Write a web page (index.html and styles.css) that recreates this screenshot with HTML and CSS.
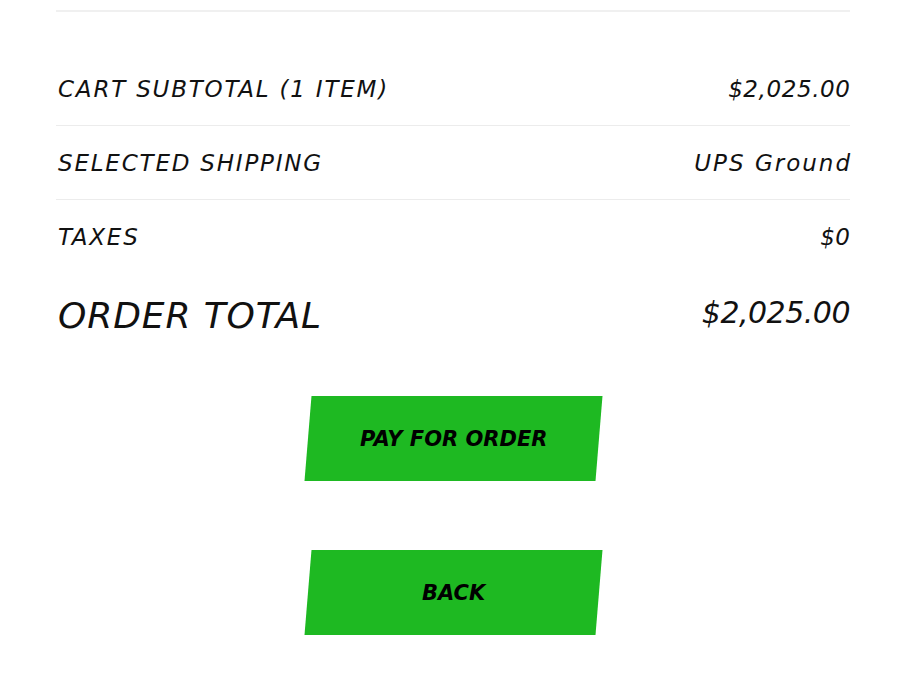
FILE: index.html
```html
<!DOCTYPE html>
<html>
<head>
<meta charset="utf-8">
<link rel="stylesheet" href="styles.css">
</head>
<body>
<div class="summary">
  <div class="top-rule"></div>
  <div class="row">
    <span class="label">CART SUBTOTAL (1 ITEM)</span>
    <span class="value">$2,025.00</span>
  </div>
  <div class="row">
    <span class="label">SELECTED SHIPPING</span>
    <span class="value value-text">UPS Ground</span>
  </div>
  <div class="row no-rule">
    <span class="label">TAXES</span>
    <span class="value">$0</span>
  </div>
  <div class="row total">
    <span class="label">ORDER TOTAL</span>
    <span class="value">$2,025.00</span>
  </div>
  <div class="actions">
    <a class="btn"><span>PAY FOR ORDER</span></a>
    <a class="btn"><span>BACK</span></a>
  </div>
</div>
</body>
</html>
```
FILE: styles.css
```css
html, body {
  margin: 0;
  padding: 0;
  background: #ffffff;
}
body {
  font-family: "DejaVu Sans", "Liberation Sans", sans-serif;
  color: #111111;
}
.summary {
  width: 794px;
  margin-left: 56px;
  padding-top: 10px;
}
.top-rule {
  border-top: 2px solid #f0f0f0;
  height: 40px;
}
.row {
  height: 73px;
  display: flex;
  justify-content: space-between;
  align-items: center;
  border-bottom: 1px solid #ececec;
  font-style: italic;
  font-size: 23px;
  padding-left: 2px;
}
.row .label {
  letter-spacing: 1.8px;
}
.row .value {
  letter-spacing: 0.6px;
  margin-right: -0.6px;
}
.row .value-text {
  letter-spacing: 2px;
  margin-right: -2px;
}
.row.no-rule {
  border-bottom: none;
  height: 74px;
}
.row.total {
  height: 80px;
  border-bottom: none;
  padding-top: 2px;
  box-sizing: border-box;
}
.row.total .label {
  font-size: 36px;
  letter-spacing: 0.9px;
}
.row.total .value {
  font-size: 30px;
  letter-spacing: -0.5px;
  margin-right: 0;
  padding-bottom: 5px;
}
.actions {
  display: flex;
  flex-direction: column;
  align-items: center;
  gap: 69px;
  padding-top: 42px;
}
.btn {
  width: 291px;
  height: 85px;
  background: #1eb922;
  transform: skewX(-4.7deg);
  display: flex;
  align-items: center;
  justify-content: center;
  text-decoration: none;
  color: #000;
}
.btn span {
  transform: skewX(4.7deg);
  font-style: italic;
  font-weight: 700;
  font-size: 21px;
}
```
